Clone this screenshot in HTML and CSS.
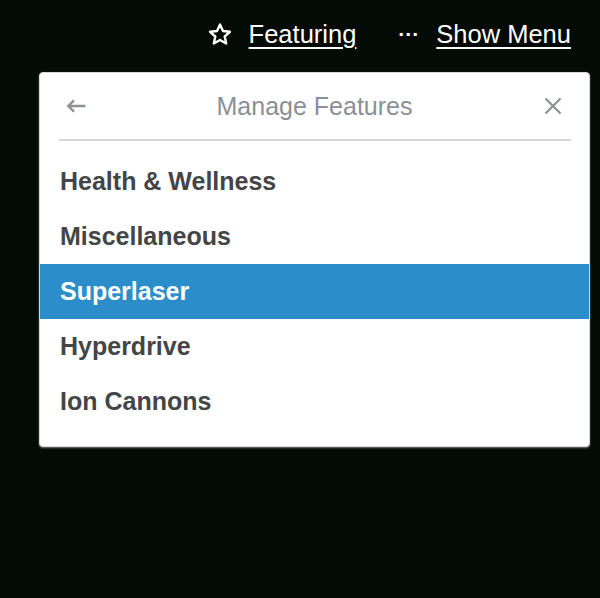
FILE: index.html
```html
<!DOCTYPE html>
<html lang="en">
<head>
<meta charset="UTF-8" />
<title>Manage Features</title>
<link rel="stylesheet" href="styles.css">
</head>
<body>

<nav class="topbar">
  <a class="nav-link" href="#">
    <svg class="nav-icon" width="24" height="23" viewBox="0 0 24 23" aria-hidden="true">
      <path d="M12 1.6l3 6.4 6.9.8-5.2 4.7 1.5 7L12 17l-6.2 3.5 1.5-7L2.1 8.8 9 8z" fill="none" stroke="#fff" stroke-width="2.4" stroke-linejoin="round"/>
    </svg>
    <span class="nav-text">Featuring</span>
  </a>
  <a class="nav-link" href="#">
    <span class="dots">&middot;&middot;&middot;</span>
    <span class="nav-text">Show Menu</span>
  </a>
</nav>

<div class="popover">
  <div class="popover-header">
    <button class="icon-btn" aria-label="Back">
      <svg width="20" height="14" viewBox="0 0 20 14" aria-hidden="true">
        <path d="M19.5 7H2.5M8 1.3L2.3 7 8 12.7" fill="none" stroke="#8c9196" stroke-width="2.4"/>
      </svg>
    </button>
    <h3 class="popover-title">Manage Features</h3>
    <button class="icon-btn" aria-label="Close">
      <svg width="18" height="18" viewBox="0 0 18 18" aria-hidden="true">
        <path d="M1.5 1.5l15 15M16.5 1.5l-15 15" fill="none" stroke="#8c9196" stroke-width="2.2"/>
      </svg>
    </button>
  </div>
  <ul class="feature-list">
    <li class="feature-item">Health &amp; Wellness</li>
    <li class="feature-item">Miscellaneous</li>
    <li class="feature-item active">Superlaser</li>
    <li class="feature-item">Hyperdrive</li>
    <li class="feature-item">Ion Cannons</li>
  </ul>
</div>

</body>
</html>
```

FILE: styles.css
```css
body {
  margin: 0;
  background: #040a06;
  font-family: "Liberation Sans", Arial, sans-serif;
  min-height: 100vh;
}
.topbar {
  display: flex;
  justify-content: flex-end;
  align-items: center;
  gap: 42px;
  height: 68px;
  padding: 0 29px 0 0;
}
.nav-link {
  display: flex;
  align-items: center;
  color: #fff;
  text-decoration: none;
}
.nav-icon {
  margin-right: 17px;
}
.nav-text {
  font-size: 25.5px;
  text-decoration: underline;
  text-underline-offset: 4px;
  text-decoration-thickness: 2px;
}
.dots {
  font-size: 21px;
  font-weight: bold;
  margin-right: 17px;
}
.popover {
  width: 549px;
  margin: 4px 0 0 39px;
  background: #fff;
  border: 1px solid #d6d6d6;
  border-radius: 4px;
  box-shadow: 0 1px 2px rgba(200, 200, 200, 0.6);
  padding-bottom: 17px;
}
.popover-header {
  display: flex;
  align-items: center;
  justify-content: space-between;
  height: 66px;
  margin: 0 18px 0 19px;
  padding: 0 8px 0 7px;
  border-bottom: 2px solid #d8d8d8;
}
.icon-btn {
  background: none;
  border: none;
  padding: 0;
  width: 20px;
  height: 20px;
  display: flex;
  align-items: center;
  justify-content: center;
  cursor: pointer;
}
.popover-title {
  margin: 0;
  font-size: 25px;
  font-weight: normal;
  color: #8a9096;
}
.feature-list {
  list-style: none;
  margin: 0;
  padding: 13px 0 0;
}
.feature-item {
  height: 55px;
  line-height: 55px;
  padding-left: 20px;
  font-size: 25px;
  font-weight: bold;
  color: #444546;
}
.feature-item.active {
  background: #2b8ecb;
  color: #fff;
}
```
